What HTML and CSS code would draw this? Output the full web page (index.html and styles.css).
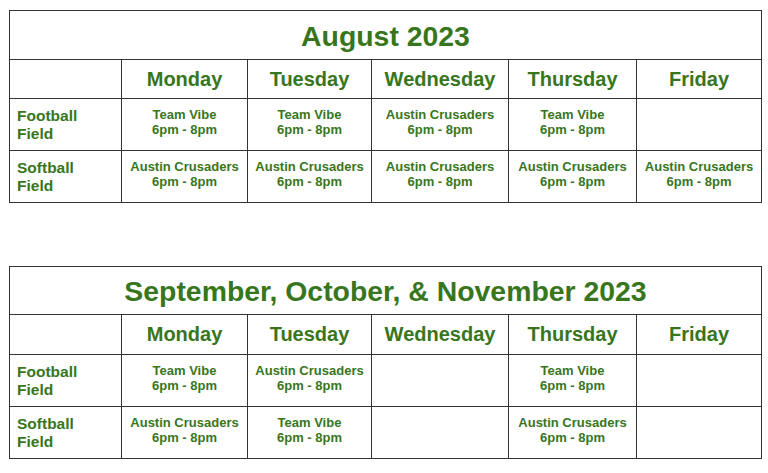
FILE: index.html
```html
<!DOCTYPE html>
<html lang="en">
<head>
<meta charset="utf-8">
<title>Field Schedule</title>
<link rel="stylesheet" href="styles.css">
</head>
<body>
<div class="page">
  <div class="schedule">
    <div class="title">August 2023</div>
    <div class="head corner"></div>
    <div class="head">Monday</div>
    <div class="head">Tuesday</div>
    <div class="head">Wednesday</div>
    <div class="head">Thursday</div>
    <div class="head">Friday</div>

    <div class="field">Football<br>Field</div>
    <div class="slot">Team Vibe<br>6pm - 8pm</div>
    <div class="slot">Team Vibe<br>6pm - 8pm</div>
    <div class="slot">Austin Crusaders<br>6pm - 8pm</div>
    <div class="slot">Team Vibe<br>6pm - 8pm</div>
    <div class="slot"></div>

    <div class="field">Softball<br>Field</div>
    <div class="slot">Austin Crusaders<br>6pm - 8pm</div>
    <div class="slot">Austin Crusaders<br>6pm - 8pm</div>
    <div class="slot">Austin Crusaders<br>6pm - 8pm</div>
    <div class="slot">Austin Crusaders<br>6pm - 8pm</div>
    <div class="slot">Austin Crusaders<br>6pm - 8pm</div>
  </div>

  <div class="schedule second">
    <div class="title">September, October, &amp; November 2023</div>
    <div class="head corner"></div>
    <div class="head">Monday</div>
    <div class="head">Tuesday</div>
    <div class="head">Wednesday</div>
    <div class="head">Thursday</div>
    <div class="head">Friday</div>

    <div class="field">Football<br>Field</div>
    <div class="slot">Team Vibe<br>6pm - 8pm</div>
    <div class="slot">Austin Crusaders<br>6pm - 8pm</div>
    <div class="slot"></div>
    <div class="slot">Team Vibe<br>6pm - 8pm</div>
    <div class="slot"></div>

    <div class="field">Softball<br>Field</div>
    <div class="slot">Austin Crusaders<br>6pm - 8pm</div>
    <div class="slot">Team Vibe<br>6pm - 8pm</div>
    <div class="slot"></div>
    <div class="slot">Austin Crusaders<br>6pm - 8pm</div>
    <div class="slot"></div>
  </div>
</div>
</body>
</html>
```
FILE: styles.css
```css
html, body {
  margin: 0;
  padding: 0;
  background: #ffffff;
}

.page {
  padding: 10px 0 0 9px;
  font-family: "Liberation Sans", Arial, sans-serif;
  font-weight: bold;
  color: #38761d;
}

.schedule {
  display: grid;
  width: 751px;
  grid-template-columns: 111px 125px 123px 136px 127px 124px;
  grid-template-rows: 48px 38px 51px 51px;
  gap: 1px;
  background: #333333;
  border: 1px solid #333333;
}

.schedule.second {
  margin-top: 63px;
  grid-template-rows: 47px 39px 51px 51px;
}

.schedule > div {
  background: #ffffff;
}

.title {
  grid-column: 1 / -1;
  display: flex;
  align-items: center;
  justify-content: center;
  font-size: 28.4px;
  padding-top: 2px;
}

.head {
  display: flex;
  align-items: center;
  justify-content: center;
  font-size: 20px;
}

.field {
  display: flex;
  align-items: center;
  padding-left: 7px;
  font-size: 15.5px;
  line-height: 18px;
}

.slot {
  display: flex;
  align-items: center;
  justify-content: center;
  text-align: center;
  font-size: 13px;
  line-height: 15px;
  padding-bottom: 5px;
}
```
